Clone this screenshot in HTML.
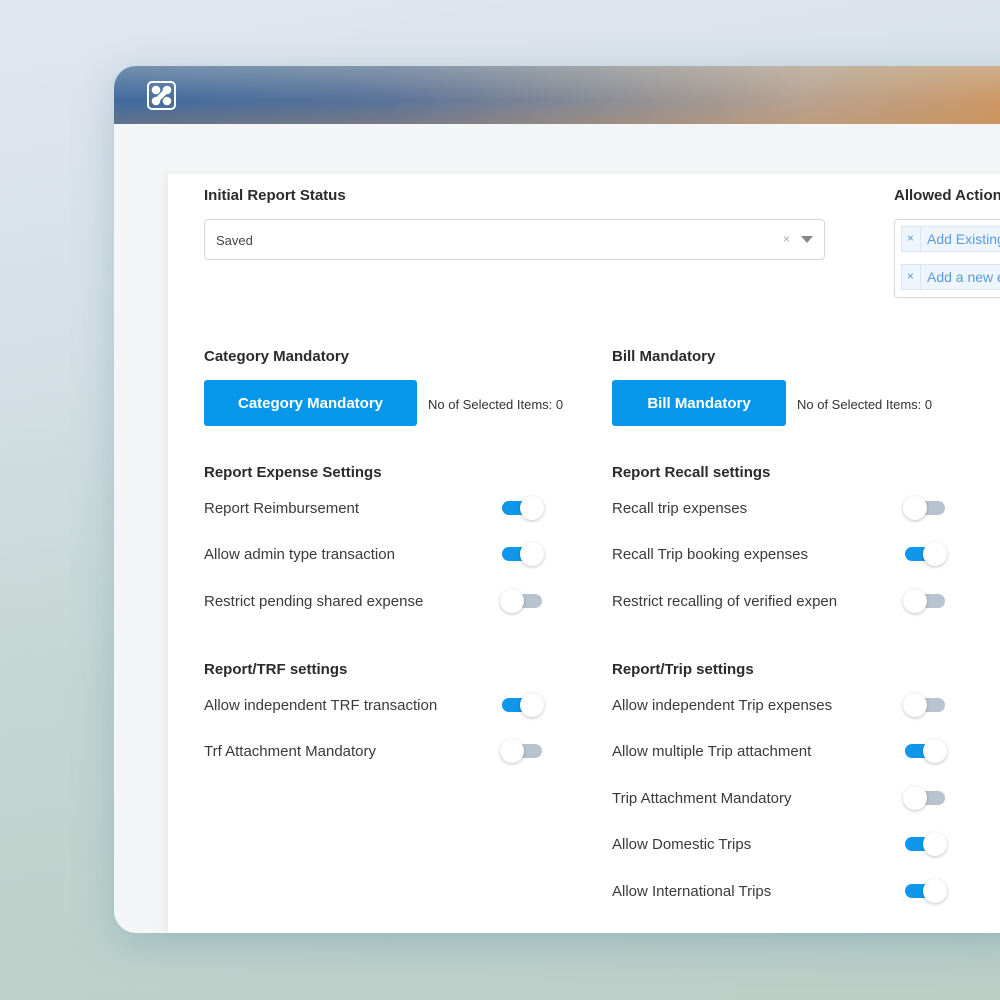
<!DOCTYPE html><html><head><style>
*{margin:0;padding:0;box-sizing:border-box}
body{width:1000px;height:1000px;overflow:hidden;position:relative;font-family:"Liberation Sans",sans-serif;color:#333;
background:linear-gradient(170deg,#e2e6f0 0%,#d5e0e6 30%,#c3d6d2 60%,#b9cfc6 100%);}
.win{position:absolute;left:114px;top:66px;width:920px;height:867px;border-radius:22px;overflow:hidden;background:#f3f5f6;box-shadow:0 10px 40px rgba(90,140,160,.35)}
.hdr{position:absolute;left:0;top:0;right:0;height:58px;
background:linear-gradient(90deg,#3f6a9e 0%,#5a7399 30%,#8f8f95 55%,#b8a290 75%,#d0965e 100%);}
.hdr:after{content:"";position:absolute;inset:0;background:linear-gradient(180deg,rgba(210,215,205,.35) 0%,rgba(210,215,205,0) 60%,rgba(200,140,80,.25) 100%)}
.card{position:absolute;left:168px;top:174px;width:840px;height:759px;background:#fff;box-shadow:-4px 0 8px rgba(0,0,0,.04)}
.a{position:absolute;white-space:nowrap}
.h{font-weight:bold;font-size:15px;color:#2b2b2b}
.l{font-size:15px;color:#3a3a3a}
.tg{position:absolute;width:40px;height:14px;border-radius:7px}
.tg.on{background:#0f97ec}.tg.off{background:#b7c4d0}
.tg i{position:absolute;top:-5px;width:24px;height:24px;border-radius:50%;background:#fff;box-shadow:0 1px 3px rgba(0,0,0,.25)}
.tg.on i{right:-2px}.tg.off i{left:-2px}
.btn{position:absolute;height:46px;background:#0797ea;border-radius:3px;color:#fff;font-weight:bold;font-size:15px;text-align:center;line-height:47px}
.small{font-size:13px;color:#333}
</style></head><body>
<div class="win">
<div class="hdr"><svg style="position:absolute;left:33px;top:15px;z-index:2" width="29" height="29" viewBox="0 0 29 29"><rect x="1" y="1" width="27" height="27" rx="4" fill="none" stroke="#fff" stroke-width="2"/><circle cx="9" cy="9" r="4.3" fill="#fff"/><circle cx="20" cy="9" r="4.3" fill="#fff"/><circle cx="9" cy="20" r="4.3" fill="#fff"/><circle cx="20" cy="20" r="4.3" fill="#fff"/><path d="M18 7.5 L21.5 11 L11 21.5 L7.5 18Z" fill="#fff"/></svg></div>
</div>
<div class="card"></div>
<div class="a h" style="left:204px;top:187px">Initial Report Status</div>
<div class="a" style="left:204px;top:219px;width:621px;height:41px;border:1px solid #d5d8db;border-radius:4px"></div>
<div class="a" style="left:216px;top:233px;font-size:13px;color:#444">Saved</div>
<div class="a" style="left:783px;top:232px;font-size:12px;color:#aaa">×</div>
<div class="a" style="left:801px;top:236px;width:0;height:0;border-left:6px solid transparent;border-right:6px solid transparent;border-top:7px solid #888"></div>
<div class="a h" style="left:894px;top:187px">Allowed Actions</div>
<div class="a" style="left:894px;top:219px;width:130px;height:79px;border:1px solid #d5d8db;border-radius:4px"></div>
<div class="a" style="left:901px;top:226px;width:120px;height:26px;background:#eef5fd;border:1px solid #d6e6f6"></div>
<div class="a" style="left:901px;top:264px;width:120px;height:26px;background:#eef5fd;border:1px solid #d6e6f6"></div>
<div class="a" style="left:907px;top:231px;font-size:12px;color:#5a9ae0">×</div>
<div class="a" style="left:907px;top:269px;font-size:12px;color:#5a9ae0">×</div>
<div class="a" style="left:920px;top:226px;width:1px;height:26px;background:#d6e6f6"></div>
<div class="a" style="left:920px;top:264px;width:1px;height:26px;background:#d6e6f6"></div>
<div class="a" style="left:927px;top:231px;font-size:14px;color:#5a9ae0">Add Existing</div>
<div class="a" style="left:927px;top:269px;font-size:14px;color:#5a9ae0">Add a new expense</div>

<div class="a h" style="left:204px;top:348px">Category Mandatory</div>
<div class="btn" style="left:204px;top:380px;width:213px">Category Mandatory</div>
<div class="a small" style="left:428px;top:397px">No of Selected Items: 0</div>
<div class="a h" style="left:612px;top:348px">Bill Mandatory</div>
<div class="btn" style="left:612px;top:380px;width:174px">Bill Mandatory</div>
<div class="a small" style="left:797px;top:397px">No of Selected Items: 0</div>

<div class="a h" style="left:204px;top:464px">Report Expense Settings</div>
<div class="a l" style="left:204px;top:500px">Report Reimbursement</div><div class="tg on" style="left:502px;top:501px"><i></i></div>
<div class="a l" style="left:204px;top:546px">Allow admin type transaction</div><div class="tg on" style="left:502px;top:547px"><i></i></div>
<div class="a l" style="left:204px;top:593px">Restrict pending shared expense</div><div class="tg off" style="left:502px;top:594px"><i></i></div>

<div class="a h" style="left:612px;top:464px">Report Recall settings</div>
<div class="a l" style="left:612px;top:500px">Recall trip expenses</div><div class="tg off" style="left:905px;top:501px"><i></i></div>
<div class="a l" style="left:612px;top:546px">Recall Trip booking expenses</div><div class="tg on" style="left:905px;top:547px"><i></i></div>
<div class="a l" style="left:612px;top:593px">Restrict recalling of verified expen</div><div class="tg off" style="left:905px;top:594px"><i></i></div>

<div class="a h" style="left:204px;top:661px">Report/TRF settings</div>
<div class="a l" style="left:204px;top:697px">Allow independent TRF transaction</div><div class="tg on" style="left:502px;top:698px"><i></i></div>
<div class="a l" style="left:204px;top:743px">Trf Attachment Mandatory</div><div class="tg off" style="left:502px;top:744px"><i></i></div>

<div class="a h" style="left:612px;top:661px">Report/Trip settings</div>
<div class="a l" style="left:612px;top:697px">Allow independent Trip expenses</div><div class="tg off" style="left:905px;top:698px"><i></i></div>
<div class="a l" style="left:612px;top:743px">Allow multiple Trip attachment</div><div class="tg on" style="left:905px;top:744px"><i></i></div>
<div class="a l" style="left:612px;top:790px">Trip Attachment Mandatory</div><div class="tg off" style="left:905px;top:791px"><i></i></div>
<div class="a l" style="left:612px;top:836px">Allow Domestic Trips</div><div class="tg on" style="left:905px;top:837px"><i></i></div>
<div class="a l" style="left:612px;top:883px">Allow International Trips</div><div class="tg on" style="left:905px;top:884px"><i></i></div>
</body></html>
